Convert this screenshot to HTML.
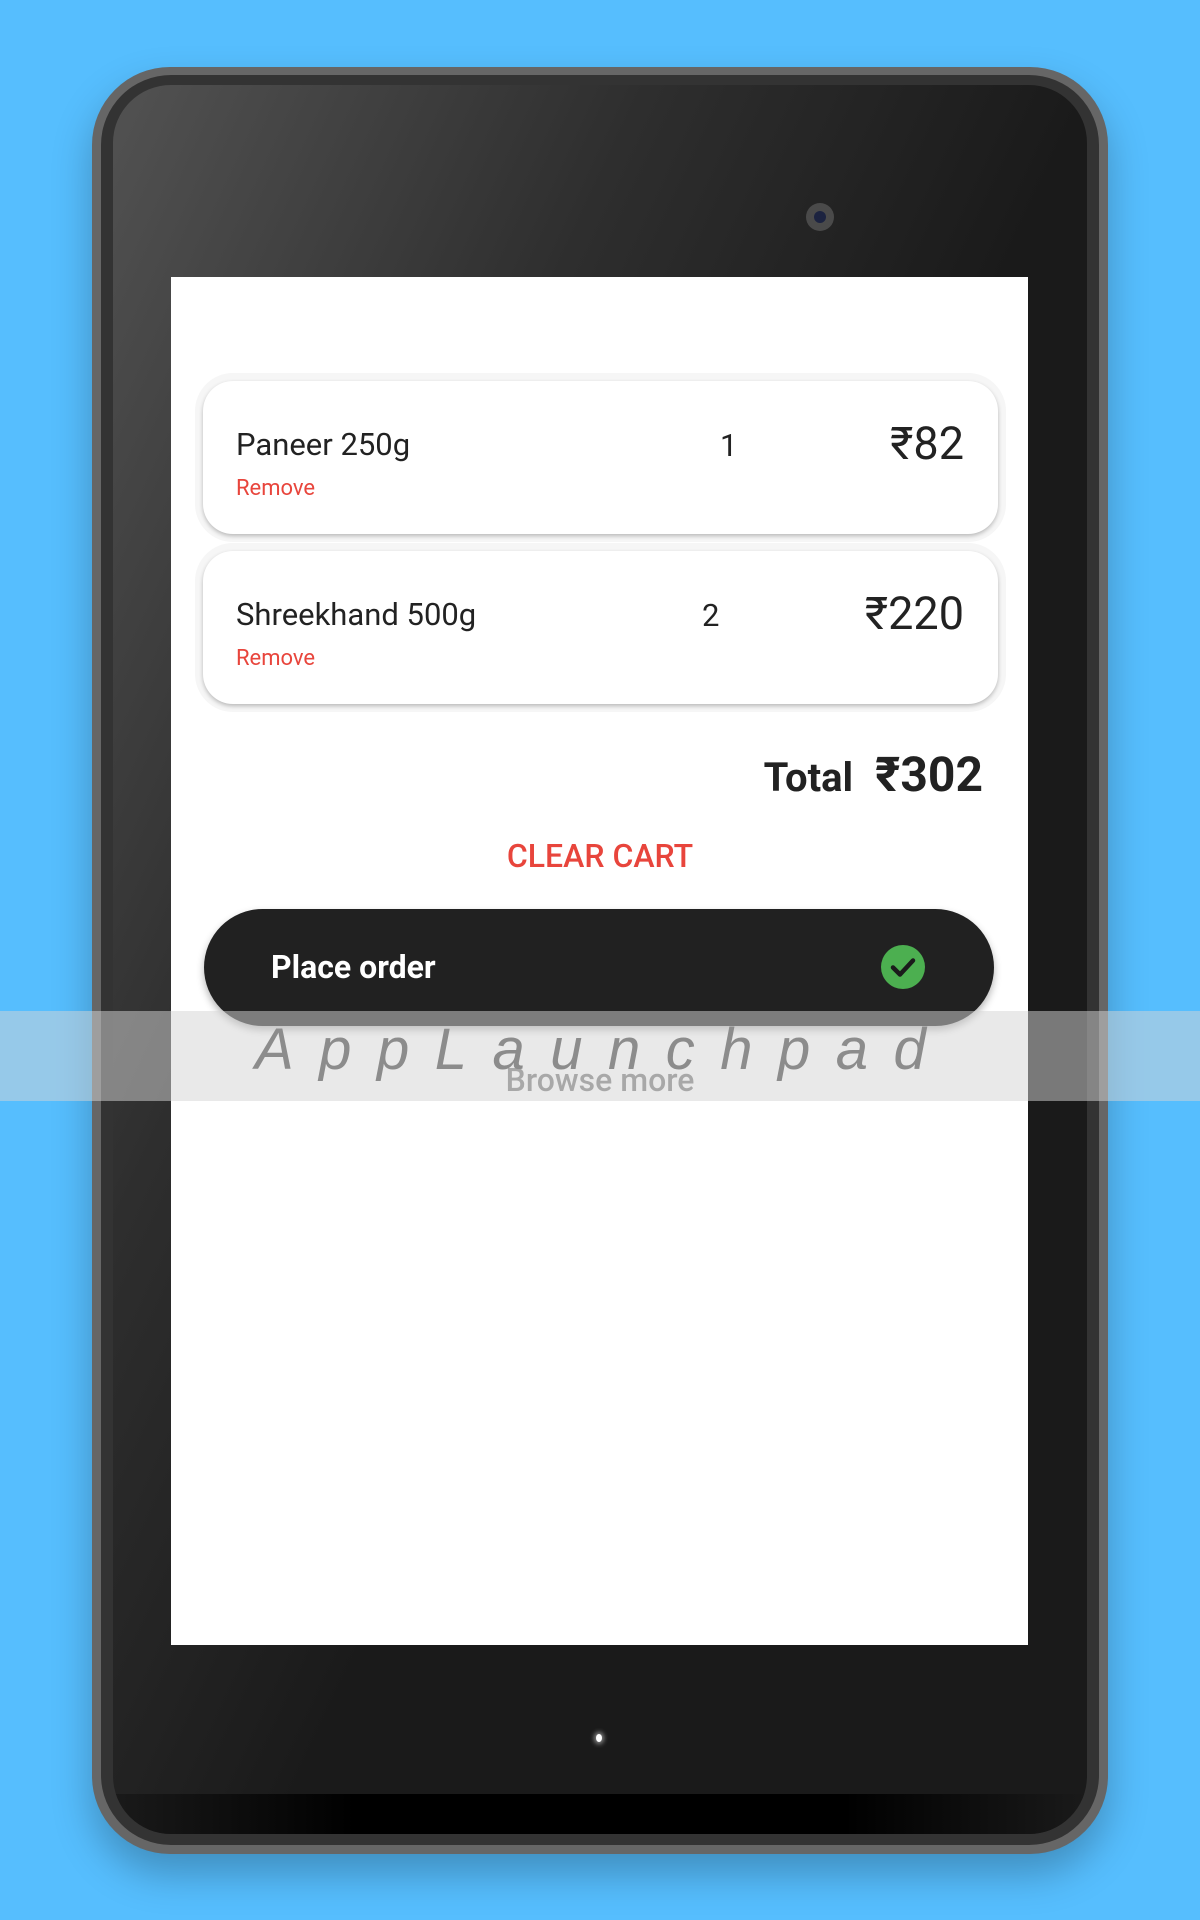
<!DOCTYPE html>
<html><head><meta charset="utf-8"><style>
*{margin:0;padding:0;box-sizing:border-box}
body{width:1200px;height:1920px;background:#56befe;position:relative;overflow:hidden;font-family:"Roboto","Liberation Sans",sans-serif}
.outer{position:absolute;left:92px;top:67px;width:1016px;height:1787px;border-radius:78px;background:#666;box-shadow:0 20px 40px rgba(0,0,0,.25)}
.mid{position:absolute;left:101px;top:75px;width:998px;height:1770px;border-radius:70px;background:#333}
.inner{position:absolute;left:113px;top:85px;width:974px;height:1749px;border-radius:58px;background:linear-gradient(115deg,#525252 0%,#2e2e2e 30%,#1a1a1a 55%,#1a1a1a 100%);overflow:hidden}
.inner:after{content:"";position:absolute;left:0;right:0;bottom:0;height:40px;background:linear-gradient(90deg,#1a1a1a 0%,#000 25%,#000 75%,#1a1a1a 100%);border-radius:0 0 58px 58px}
.cam{position:absolute;left:806px;top:203px;width:28px;height:28px;border-radius:50%;background:#4a4a4a}
.cam:after{content:"";position:absolute;left:8px;top:8px;width:12px;height:12px;border-radius:50%;background:#1c2340}
.dot{position:absolute;left:596px;top:1734px;width:6px;height:8px;border-radius:50%;background:#fff;box-shadow:0 0 5px 2px rgba(255,255,255,.5)}
.screen{position:absolute;left:171px;top:277px;width:857px;height:1368px;background:#fff}
.card{position:absolute;left:203px;width:795px;height:153px;border-radius:30px;background:#fff;box-shadow:0 2px 4px rgba(0,0,0,.25),0 0 0 8px #f6f6f6}
.name{position:absolute;left:33px;top:45px;font-size:31px;color:#222}
.rem{position:absolute;left:33px;top:95px;font-size:22px;color:#e8453c}
.qty{position:absolute;top:46px;font-size:31px;color:#222}
.price{position:absolute;right:34px;top:36px;font-size:45px;color:#222}
.total{position:absolute;right:217px;top:746px;font-weight:bold;color:#222;white-space:nowrap}
.clear{position:absolute;left:0;width:1200px;top:837px;text-align:center;font-size:32px;font-weight:500;color:#e8453c}
.btn{position:absolute;left:204px;top:909px;width:790px;height:117px;border-radius:59px;background:#212121;box-shadow:0 4px 8px rgba(0,0,0,.3)}
.btn span{position:absolute;left:67px;top:39px;font-size:32px;font-weight:bold;color:#fff}
.chk{position:absolute;left:677px;top:36px;width:44px;height:44px;border-radius:50%;background:#4caf50}
.band{position:absolute;left:0;top:1011px;width:1200px;height:90px;background:rgba(212,212,212,.515)}
.wm{position:absolute;left:255px;top:1016px;font-size:58px;font-style:italic;color:#8c8c8c;letter-spacing:25.5px;white-space:nowrap;font-family:"Liberation Sans",sans-serif}
.bm{position:absolute;left:0;width:1200px;top:1061px;text-align:center;font-size:32px;font-weight:500;color:#7a7a7a}
</style></head><body>
<div class="outer"></div><div class="mid"></div><div class="inner"></div>
<div class="cam"></div><div class="dot"></div>
<div class="screen"></div>
<div class="card" style="top:381px"><div class="name">Paneer 250g</div><div class="rem">Remove</div><div class="qty" style="left:517px">1</div><div class="price">₹82</div></div>
<div class="card" style="top:551px"><div class="name">Shreekhand 500g</div><div class="rem">Remove</div><div class="qty" style="left:499px">2</div><div class="price">₹220</div></div>
<div class="total"><span style="font-size:40px">Total</span><span style="display:inline-block;width:22px"></span><span style="font-size:48px">₹302</span></div>
<div class="clear">CLEAR CART</div>
<div class="btn"><span>Place order</span><div class="chk"><svg width="44" height="44" viewBox="0 0 44 44"><path d="M12 22.5l7 7 13-14" fill="none" stroke="#1b1b1b" stroke-width="4.5" stroke-linecap="round" stroke-linejoin="round"/></svg></div></div>
<div class="bm">Browse more</div>
<div class="band"></div>
<div class="wm">AppLaunchpad</div>
</body></html>
